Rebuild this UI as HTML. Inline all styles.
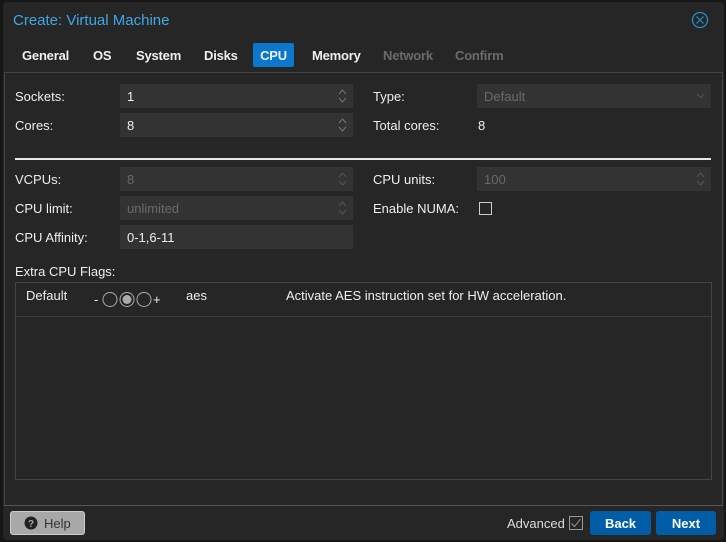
<!DOCTYPE html><html><head><style>
*{box-sizing:border-box;margin:0;padding:0}
body{width:726px;height:542px;background:#161616;font-family:"Liberation Sans",sans-serif;font-size:13px;color:#f0f0f0;position:relative;overflow:hidden}
.a{position:absolute}
.dlg{left:3px;top:2px;width:721px;height:538px;background:#262626;border-radius:4px}
.lbl{font-size:13px;color:#eee}
.f{position:absolute;height:24px;background:#333;color:#f0f0f0;padding:5px 7px;font-size:13px}
.dis{color:#6a6a6a}
.sp{position:absolute;right:6px;top:3px;width:9px;height:18px}
.tab{position:absolute;top:43px;height:24px;padding:5px 0;font-weight:bold;font-size:13px;color:#f0f0f0;letter-spacing:-0.2px}
.btn{position:absolute;top:511px;height:24px;background:#005ea8;border-radius:3px;color:#fff;font-weight:bold;text-align:center;padding-top:5px}
</style></head><body>
<div class="a dlg"></div>
<div class="a" style="left:13px;top:12px;font-size:15px;color:#3ea7e6">Create: Virtual Machine</div>
<svg class="a" style="left:691px;top:11px" width="18" height="18"><circle cx="9" cy="9" r="7.5" fill="none" stroke="#1e90c8" stroke-width="1.3"/><path d="M5.5 5.5L12.5 12.5M12.5 5.5L5.5 12.5" stroke="#1e90c8" stroke-width="1.2"/></svg>
<div class="tab" style="left:22px">General</div>
<div class="tab" style="left:93px">OS</div>
<div class="tab" style="left:136px">System</div>
<div class="tab" style="left:204px">Disks</div>
<div class="tab" style="left:253px;width:41px;background:#0a78cf;border-radius:2px;text-align:center">CPU</div>
<div class="tab" style="left:312px">Memory</div>
<div class="tab" style="left:383px;color:#6b6b6b">Network</div>
<div class="tab" style="left:455px;color:#6b6b6b">Confirm</div>
<div class="a" style="left:4px;top:72px;width:719px;height:434px;border:1px solid #444;border-bottom:1px solid #555;background:#262626"></div>
<div class="a lbl" style="left:15px;top:89px">Sockets:</div>
<div class="f" style="left:120px;top:84px;width:233px">1<svg class="sp" viewBox="0 0 9 18"><path d="M1 7L4.5 3L8 7M1 11L4.5 15L8 11" fill="none" stroke="#777"/></svg></div>
<div class="a lbl" style="left:15px;top:118px">Cores:</div>
<div class="f" style="left:120px;top:113px;width:233px">8<svg class="sp" viewBox="0 0 9 18"><path d="M1 7L4.5 3L8 7M1 11L4.5 15L8 11" fill="none" stroke="#777"/></svg></div>
<div class="a lbl" style="left:373px;top:89px">Type:</div>
<div class="f dis" style="left:477px;top:84px;width:234px">Default<svg class="sp" viewBox="0 0 9 18"><path d="M1 7L4.5 10.5L8 7" fill="none" stroke="#555"/></svg></div>
<div class="a lbl" style="left:373px;top:118px">Total cores:</div>
<div class="a lbl" style="left:478px;top:118px">8</div>
<div class="a" style="left:15px;top:158px;width:696px;height:2px;background:#e8e8e8"></div>
<div class="a lbl" style="left:15px;top:172px">VCPUs:</div>
<div class="f dis" style="left:120px;top:167px;width:233px">8<svg class="sp" viewBox="0 0 9 18"><path d="M1 7L4.5 3L8 7M1 11L4.5 15L8 11" fill="none" stroke="#555"/></svg></div>
<div class="a lbl" style="left:15px;top:201px">CPU limit:</div>
<div class="f dis" style="left:120px;top:196px;width:233px">unlimited<svg class="sp" viewBox="0 0 9 18"><path d="M1 7L4.5 3L8 7M1 11L4.5 15L8 11" fill="none" stroke="#555"/></svg></div>
<div class="a lbl" style="left:15px;top:230px">CPU Affinity:</div>
<div class="f" style="left:120px;top:225px;width:233px">0-1,6-11</div>
<div class="a lbl" style="left:373px;top:172px">CPU units:</div>
<div class="f dis" style="left:477px;top:167px;width:234px">100<svg class="sp" viewBox="0 0 9 18"><path d="M1 7L4.5 3L8 7M1 11L4.5 15L8 11" fill="none" stroke="#555"/></svg></div>
<div class="a lbl" style="left:373px;top:201px">Enable NUMA:</div>
<div class="a" style="left:479px;top:202px;width:13px;height:13px;border:1px solid #ccc"></div>
<div class="a lbl" style="left:15px;top:264px">Extra CPU Flags:</div>
<div class="a" style="left:15px;top:282px;width:697px;height:198px;border:1px solid #444"></div>
<div class="a" style="left:16px;top:316px;width:695px;height:1px;background:#3c3c3c"></div>
<div class="a lbl" style="left:26px;top:288px">Default</div>
<div class="a lbl" style="left:94px;top:292px">-</div>
<svg class="a" style="left:102px;top:291px" width="50" height="17"><circle cx="8" cy="8.5" r="7" fill="none" stroke="#aaa"/><circle cx="25" cy="8.5" r="7" fill="none" stroke="#aaa"/><circle cx="25" cy="8.5" r="4.5" fill="#aaa"/><circle cx="42" cy="8.5" r="7" fill="none" stroke="#aaa"/></svg>
<div class="a lbl" style="left:153px;top:292px">+</div>
<div class="a lbl" style="left:186px;top:288px">aes</div>
<div class="a lbl" style="left:286px;top:288px">Activate AES instruction set for HW acceleration.</div>
<div class="a" style="left:10px;top:511px;width:75px;height:24px;background:#a8a8a8;border:1px solid #ccc;border-radius:3px;color:#333;padding:4px 0 0 33px">Help</div>
<svg class="a" style="left:24px;top:516px" width="14" height="14"><circle cx="7" cy="7" r="6.5" fill="#222"/><text x="7" y="11" font-size="10" font-weight="bold" fill="#a8a8a8" text-anchor="middle" font-family="Liberation Sans">?</text></svg>
<div class="a lbl" style="left:507px;top:516px;color:#ddd">Advanced</div>
<svg class="a" style="left:569px;top:516px" width="14" height="14"><rect x="0.5" y="0.5" width="13" height="13" fill="none" stroke="#999"/><path d="M2.5 7.5L5.5 10.5L11.5 3" fill="none" stroke="#999"/></svg>
<div class="btn" style="left:590px;width:61px">Back</div>
<div class="btn" style="left:656px;width:60px">Next</div>
</body></html>
